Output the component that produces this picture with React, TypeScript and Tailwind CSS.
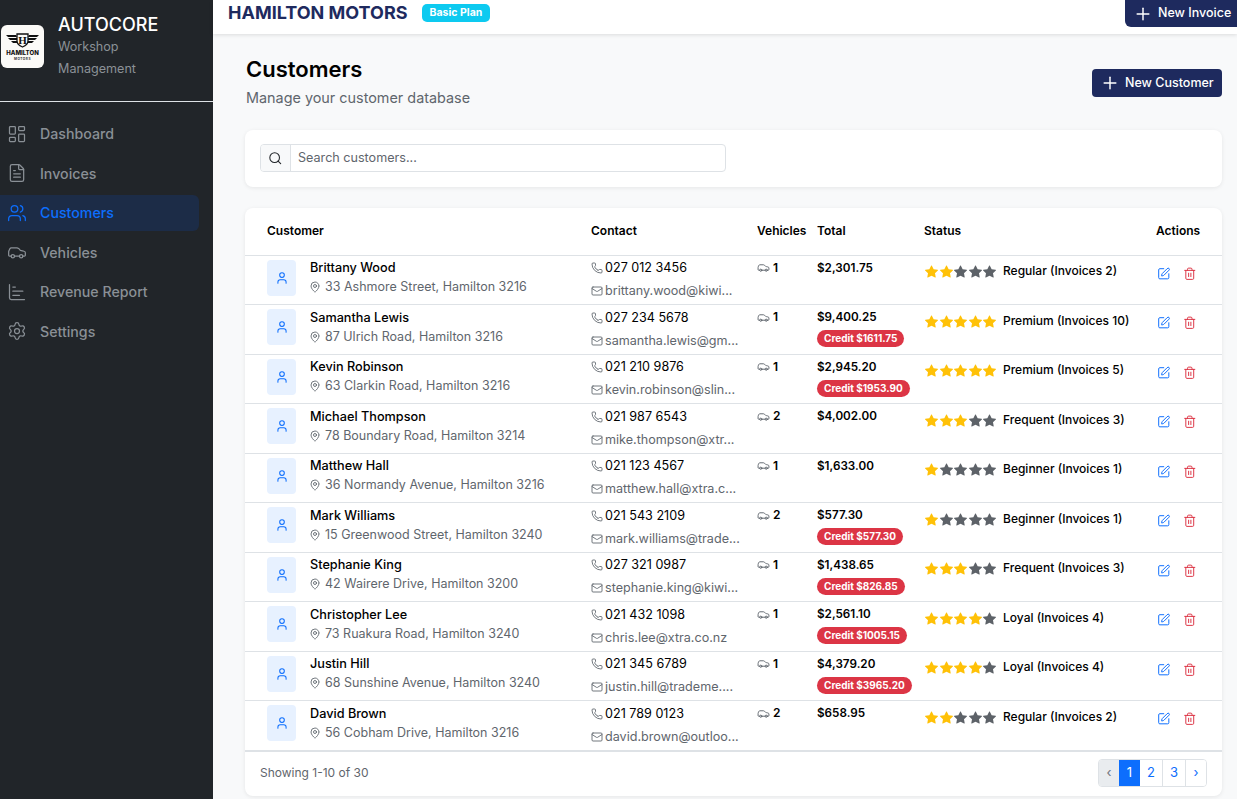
import { Car, ChartBar, FileText, LayoutDashboard, Mail, MapPin, Phone, Plus, Search, Settings, SquarePen, Trash2, User, Users } from 'lucide-react'
import { BsStarFill } from 'react-icons/bs'

const NAVY = 'bg-[#1e2a5e]'
const COLS = 'grid grid-cols-[324px_166px_60px_107px_232px_1fr]'

const NAV_ITEMS = [
  { label: 'Dashboard', icon: LayoutDashboard },
  { label: 'Invoices', icon: FileText },
  { label: 'Customers', icon: Users, active: true },
  { label: 'Vehicles', icon: Car },
  { label: 'Revenue Report', icon: ChartBar },
  { label: 'Settings', icon: Settings },
]

const CUSTOMERS = [
  { name: 'Brittany Wood', address: '33 Ashmore Street, Hamilton 3216', phone: '027 012 3456', email: 'brittany.wood@kiwi...', vehicles: 1, total: '$2,301.75', stars: 2, status: 'Regular (Invoices 2)' },
  { name: 'Samantha Lewis', address: '87 Ulrich Road, Hamilton 3216', phone: '027 234 5678', email: 'samantha.lewis@gm...', vehicles: 1, total: '$9,400.25', credit: '$1611.75', stars: 5, status: 'Premium (Invoices 10)' },
  { name: 'Kevin Robinson', address: '63 Clarkin Road, Hamilton 3216', phone: '021 210 9876', email: 'kevin.robinson@slin...', vehicles: 1, total: '$2,945.20', credit: '$1953.90', stars: 5, status: 'Premium (Invoices 5)' },
  { name: 'Michael Thompson', address: '78 Boundary Road, Hamilton 3214', phone: '021 987 6543', email: 'mike.thompson@xtr...', vehicles: 2, total: '$4,002.00', stars: 3, status: 'Frequent (Invoices 3)' },
  { name: 'Matthew Hall', address: '36 Normandy Avenue, Hamilton 3216', phone: '021 123 4567', email: 'matthew.hall@xtra.c...', vehicles: 1, total: '$1,633.00', stars: 1, status: 'Beginner (Invoices 1)' },
  { name: 'Mark Williams', address: '15 Greenwood Street, Hamilton 3240', phone: '021 543 2109', email: 'mark.williams@trade...', vehicles: 2, total: '$577.30', credit: '$577.30', stars: 1, status: 'Beginner (Invoices 1)' },
  { name: 'Stephanie King', address: '42 Wairere Drive, Hamilton 3200', phone: '027 321 0987', email: 'stephanie.king@kiwi...', vehicles: 1, total: '$1,438.65', credit: '$826.85', stars: 3, status: 'Frequent (Invoices 3)' },
  { name: 'Christopher Lee', address: '73 Ruakura Road, Hamilton 3240', phone: '021 432 1098', email: 'chris.lee@xtra.co.nz', vehicles: 1, total: '$2,561.10', credit: '$1005.15', stars: 4, status: 'Loyal (Invoices 4)' },
  { name: 'Justin Hill', address: '68 Sunshine Avenue, Hamilton 3240', phone: '021 345 6789', email: 'justin.hill@trademe....', vehicles: 1, total: '$4,379.20', credit: '$3965.20', stars: 4, status: 'Loyal (Invoices 4)' },
  { name: 'David Brown', address: '56 Cobham Drive, Hamilton 3216', phone: '021 789 0123', email: 'david.brown@outloo...', vehicles: 2, total: '$658.95', stars: 2, status: 'Regular (Invoices 2)' },
]

function Logo() {
  return (
    <div className="ml-[1px] flex h-[43px] w-[43px] shrink-0 items-center justify-center rounded-[6px] bg-[#fbfaf7]">
      <svg viewBox="0 0 43 43" className="h-[43px] w-[43px]">
        <path d="M5 10h10l1 2H7zM7 13h9l1 2H9zM10 16h7l1 2h-6zM38 10H28l-1 2h9zM36 13h-9l-1 2h8zM33 16h-7l-1 2h6z" fill="#111" />
        <path d="M16 9h11v7c0 3-3 5-5.500 6-2.500-1-5.500-3-5.500-6z" fill="#fbfaf7" stroke="#111" strokeWidth="1.300" />
        <text x="21.500" y="19" textAnchor="middle" fontSize="11" fontWeight="700" fill="#111" fontFamily="Liberation Serif, serif">H</text>
        <text x="21.500" y="30" textAnchor="middle" fontSize="6" fontWeight="800" fill="#111" fontFamily="Inter, sans-serif">HAMILTON</text>
        <text x="21.500" y="35" textAnchor="middle" fontSize="3.200" fontWeight="700" letterSpacing="0.500" fill="#333" fontFamily="Inter, sans-serif">MOTORS</text>
      </svg>
    </div>
  )
}

function Sidebar() {
  return (
    <aside className="flex w-[213px] shrink-0 flex-col bg-[#212529]">
      <div className="flex h-[102px] items-start gap-[14px] border-b border-[#dee2e6] pt-[13px]">
        <div className="pt-[12px]">
          <Logo />
        </div>
        <div>
          <div className="text-[18px] font-medium leading-[23px] text-white">AUTOCORE</div>
          <div className="text-[12.600px] leading-[21.500px] text-[#8b9197]">
            Workshop
            <br />
            Management
          </div>
        </div>
      </div>
      <nav className="flex flex-col gap-[3.500px] pr-[14px] pt-[13.750px]">
        {NAV_ITEMS.map((item) => (
          <div
            key={item.label}
            className={`flex h-[36px] items-center gap-[13px] rounded-r-md pl-[7px] text-[14.200px] font-medium ${
              item.active ? 'bg-[#1c2c47] text-[#0d6efd]' : 'text-[#8a9096]'
            }`}
          >
            <item.icon size={20} strokeWidth={1.500} />
            {item.label}
          </div>
        ))}
      </nav>
    </aside>
  )
}

function Stars({ count }: { count: number }) {
  return (
    <div className="flex w-[78px] shrink-0 gap-[1.500px] pt-[4px]">
      {[0, 1, 2, 3, 4].map((i) => (
        <BsStarFill key={i} size={13} className={i < count ? 'text-[#ffc107]' : 'text-[#5d6268]'} />
      ))}
    </div>
  )
}

function CustomerRow({ customer }: { customer: (typeof CUSTOMERS)[number] }) {
  return (
    <div className={`${COLS} h-[49.500px] border-b border-[#dee2e6] pl-[22px]`}>
      <div className="flex gap-[14px] pt-[4px]">
        <div className="flex h-[36px] w-[29px] items-center justify-center rounded-[4px] bg-[#e7f1ff] text-[#0d6efd]">
          <User size={14} strokeWidth={1.750} />
        </div>
        <div className="-mt-[1.500px]">
          <div className="text-[12.700px] font-medium leading-[20px] text-black">{customer.name}</div>
          <div className="flex items-center gap-[4px] text-[12.500px] leading-[18px] text-[#5f666d]">
            <MapPin size={12} strokeWidth={1.750} className="-ml-[1px] shrink-0" />
            {customer.address}
          </div>
        </div>
      </div>
      <div className="pt-[2.500px] text-[12.600px]">
        <div className="flex items-center gap-[2px] leading-[20px] text-black">
          <Phone size={12} strokeWidth={1.750} className="text-[#5f666d]" />
          {customer.phone}
        </div>
        <div className="mt-[3px] flex items-center gap-[2px] leading-[20px] text-[#5f666d]">
          <Mail size={12} strokeWidth={1.750} />
          {customer.email}
        </div>
      </div>
      <div className="flex h-fit items-center gap-[3px] pt-[2px] text-[12px] font-semibold leading-[20px] text-black">
        <Car size={13} strokeWidth={1.750} className="text-[#5f666d]" />
        {customer.vehicles}
      </div>
      <div className="pt-[2px] text-[11.700px] font-semibold leading-[20px] text-black">
        {customer.total}
        {customer.credit && (
          <div className="mt-[3px] w-fit rounded-full bg-[#dc3545] px-[7px] text-[10px] font-bold leading-[17px] text-white">
            Credit {customer.credit}
          </div>
        )}
      </div>
      <div className="flex pl-[1px] pt-[5.500px]">
        <Stars count={customer.stars} />
        <div className="text-[12px] font-medium leading-[20px] text-black">{customer.status}</div>
      </div>
      <div className="flex gap-[12px] pl-[1px] pt-[11px]">
        <SquarePen size={13.500} strokeWidth={1.750} className="text-[#0d6efd]" />
        <Trash2 size={13.500} strokeWidth={1.750} className="text-[#dc3545]" />
      </div>
    </div>
  )
}

function Pagination() {
  return (
    <div className="flex h-[28px] overflow-hidden rounded-[4px] border border-[#dee2e6] text-[13px] text-[#0d6efd]">
      <div className="flex w-[20px] items-center justify-center bg-[#e9ecef] text-[#6c757d]">‹</div>
      <div className="flex w-[21px] items-center justify-center bg-[#0d6efd] text-white">1</div>
      <div className="flex w-[23px] items-center justify-center border-r border-[#dee2e6] bg-white">2</div>
      <div className="flex w-[23px] items-center justify-center border-r border-[#dee2e6] bg-white">3</div>
      <div className="flex w-[20px] items-center justify-center bg-white">›</div>
    </div>
  )
}

export default function App() {
  return (
    <div className="flex h-screen w-full overflow-hidden bg-[#f8f9fa] font-['Inter',sans-serif]">
      <Sidebar />
      <div className="flex min-w-0 flex-1 flex-col">
        <header className="flex h-[34px] shrink-0 items-start justify-between bg-white pl-[15px] shadow-[0_1px_4px_rgba(0,0,0,0.12)]">
          <div className="flex items-center gap-[14px]">
            <span className="text-[18px] font-bold leading-[25px] text-[#1e2a5e]">HAMILTON MOTORS</span>
            <span className="rounded-[5px] bg-[#0dcaf0] px-[8px] text-[10.500px] font-bold leading-[18px] text-white">Basic Plan</span>
          </div>
          <div className={`flex h-[27px] w-[112px] items-center gap-[5px] whitespace-nowrap rounded-bl-md pl-[8px] text-[12.500px] font-medium text-white ${NAVY}`}>
            <Plus size={20} strokeWidth={1.750} />
            New Invoice
          </div>
        </header>
        <main className="flex flex-1 flex-col pl-[32px] pr-[15px]">
          <div className="flex items-start justify-between pl-[1px] pt-[21px]">
            <div>
              <h1 className="text-[22px] font-semibold leading-[28px] text-black">Customers</h1>
              <p className="mt-[5px] text-[14.400px] leading-[20px] text-[#5f666d]">Manage your customer database</p>
            </div>
            <div className={`mt-[14px] flex h-[28px] w-[130px] items-center gap-[5px] whitespace-nowrap rounded-[4px] pl-[8px] text-[12.500px] font-medium text-white ${NAVY}`}>
              <Plus size={20} strokeWidth={1.750} />
              New Customer
            </div>
          </div>
          <section className="mt-[22px] h-[57px] rounded-lg bg-white px-[15px] pt-[14px] shadow-[0_1px_4px_rgba(0,0,0,0.08)]">
            <div className="flex h-[28px] w-[466px] overflow-hidden rounded-[4px] border border-[#dee2e6]">
              <div className="flex w-[30px] items-center justify-center border-r border-[#dee2e6] bg-[#f8f9fa] text-[#212529]">
                <Search size={14.500} strokeWidth={1.750} />
              </div>
              <div className="flex items-center pl-[7px] text-[12.600px] text-[#5f666d]">Search customers...</div>
            </div>
          </section>
          <section className="mt-[21px] rounded-lg bg-white shadow-[0_1px_4px_rgba(0,0,0,0.08)]">
            <div className={`${COLS} h-[47.500px] items-center border-b border-[#dee2e6] pl-[22px] text-[12px] font-semibold text-black`}>
              <div>Customer</div>
              <div>Contact</div>
              <div>Vehicles</div>
              <div>Total</div>
              <div>Status</div>
              <div>Actions</div>
            </div>
            {CUSTOMERS.map((customer) => (
              <CustomerRow key={customer.name} customer={customer} />
            ))}
            <div className="flex h-[45px] items-center justify-between border-t border-[#dee2e6] px-[15px] pb-[2px] text-[12px] text-[#5f666d]">
              <span>Showing 1-10 of 30</span>
              <Pagination />
            </div>
          </section>
        </main>
      </div>
    </div>
  )
}
